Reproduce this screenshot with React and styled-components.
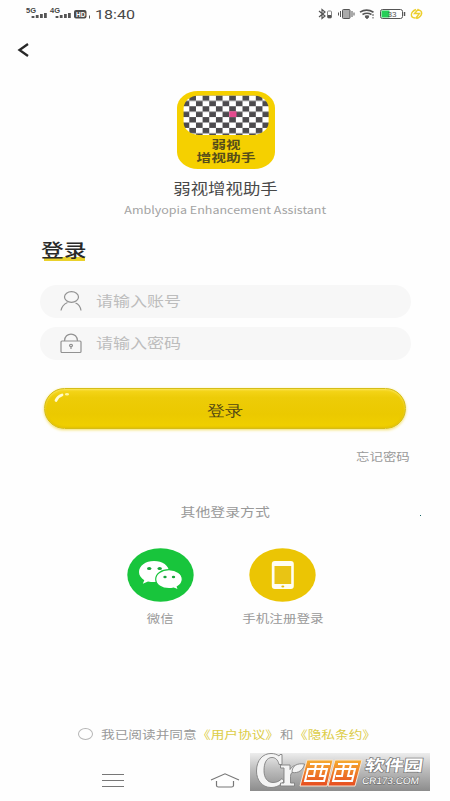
import React from 'react';
import styled, { createGlobalStyle } from 'styled-components';

const Global = createGlobalStyle`
  * { box-sizing: border-box; }
  body { margin: 0; background: #fefefe; }
  svg { display: block; flex: none; overflow: visible; }
`;
const sans = '"Noto Sans CJK SC", "Noto Sans", sans-serif';

const Screen = styled.main`
  width: 450px;
  height: 801px;
  overflow: hidden;
  display: flex;
  flex-direction: column;
  background: #fefefe;
  font-family: ${sans};
`;
/* Wide-set lettering used throughout the app */
const Text = styled.span`
  display: block;
  white-space: nowrap;
  font-size: ${p => p.$size}px;
  line-height: 20px;
  font-weight: ${p => p.$weight || 400};
  color: ${p => p.$color || '#999'};
  transform: scaleX(${p => p.$wide || 1.2});
  transform-origin: ${p => p.$from || 'left'} center;
`;
const StatusBar = styled.header`
  height: 28px;
  display: flex;
  justify-content: space-between;
  padding: 0 26px 0 25px;
`;
const NavBar = styled.nav`
  height: 63px;
  display: flex;
  align-items: flex-start;
  padding: 15px 0 0 17px;
`;
const BackButton = styled.button`
  border: 0;
  padding: 0;
  background: none;
`;
const Brand = styled.section`
  height: 146px;
  display: flex;
  flex-direction: column;
  align-items: center;
  padding-left: 1px;
`;
const AppName = styled.div`
  margin-top: 9px;
  height: 20px;
`;
const Tagline = styled.div`
  margin-top: 2px;
  height: 20px;
`;
const Form = styled.section`
  height: 247px;
  padding: 0 40px;
`;
const Heading = styled.div`
  height: 48px;
  padding: 2px 0 0 1px;
`;
const Underlined = styled.div`
  width: 45px;
  height: 22px;
  background: linear-gradient(#ead12b, #ead12b) 3px 18px / 41px 4px no-repeat;
`;
const Field = styled.div`
  width: 371px;
  height: 33px;
  margin-bottom: 9px;
  padding: 0 0 3px 20px;
  display: flex;
  align-items: center;
  gap: 14px;
  border-radius: 17px;
  background: #f7f7f7;
`;
const FieldIcon = styled.svg`
  margin-top: 2px;
`;
const Submit = styled.button`
  display: flex;
  align-items: center;
  justify-content: center;
  position: relative;
  width: 362px;
  height: 41px;
  margin: 28px 0 0 4px;
  padding: 4px 0 0;
  border: 1px solid #d5bd18;
  border-radius: 21px;
  background: linear-gradient(#f6d61c 0, #edcc08 22%, #ebc900 65%, #f1d000 100%);
  box-shadow: 0 1px 3px #f4df65, inset 0 1px 2px #fae55b, inset 0 -1px 2px #dfbd00;
`;
const Gloss = styled.svg`
  position: absolute;
  left: 9px;
  top: 3px;
`;
const Forgot = styled.div`
  display: flex;
  justify-content: flex-end;
  margin-top: 17px;
`;
const Others = styled.section`
  height: 238px;
  display: flex;
  flex-direction: column;
  align-items: center;
  padding-top: 18px;
`;
const Providers = styled.div`
  display: flex;
  width: 244px;
  margin: 26px 5px 0 0;
  justify-content: space-between;
`;
const Provider = styled.div`
  width: ${p => p.$width}px;
  display: flex;
  flex-direction: column;
  align-items: center;
  gap: 6px;
`;
const Title = styled.div`
  display: flex;
  justify-content: center;
  width: 450px;
  padding-left: 1px;
  position: relative;
`;
const Speck = styled.i`
  position: absolute;
  left: 420px;
  top: 13px;
  width: 1px;
  height: 1px;
  background: #166565;
`;
const Agreement = styled.div`
  height: 24px;
  display: flex;
  align-items: center;
  margin-left: 78px;
`;
const AgreementPart = styled.div`
  width: ${p => p.$width}px;
`;
const Radio = styled.span`
  width: 15px;
  height: 12px;
  margin-right: 8px;
  border: 1px solid #b5b5b5;
  border-radius: 50%;
`;
const SystemBar = styled.footer`
  flex: 1;
  display: flex;
  align-items: flex-start;
  padding-left: 102px;
`;
const Menu = styled.div`
  width: 22px;
  height: 13px;
  margin: 28px 86px 0 0;
  display: flex;
  flex-direction: column;
  justify-content: space-between;
`;
const MenuLine = styled.i`
  flex: none;
  height: 1px;
  background: #777;
`;
const HomeIcon = styled.svg`
  margin: 27px 10px 0 0;
`;
const Badge = styled.svg`
  margin-top: 7px;
`;

const Signal = ({ x, label }) => (
  <g transform={`translate(${x} 0)`}>
    <text x="0" y="13.2" fontSize="6.5" fontWeight="700" fontFamily="Liberation Sans, sans-serif" fill="#444" textLength="10" lengthAdjust="spacingAndGlyphs">{label}</text>
    <path d="M7 18v-2M11.2 18v-3M15.4 18v-4M19.4 18v-5" stroke="#555" strokeWidth="2.8" />
  </g>
);

const Logo = () => (
  <svg width="98" height="78" viewBox="0 0 98 78">
    <defs>
      <pattern id="check" width="13.3" height="10.84" patternUnits="userSpaceOnUse" x="12.3" y="4.4">
        <rect width="13.3" height="10.84" fill="#fff" />
        <path d="M0 0h6.65v5.42H0zM6.65 5.42h6.65v5.42H6.65z" fill="#4d4b4e" />
      </pattern>
    </defs>
    <rect width="98" height="78" rx="21" ry="17" fill="#f5d000" />
    <rect x="6.6" y="4.4" width="85" height="39.5" rx="15" ry="13" fill="url(#check)" />
    <rect x="52.2" y="20.3" width="7.3" height="5.8" fill="#e44b8e" />
    <g fontFamily={sans} fontWeight="600" fill="#574e19">
      <text x="34.5" y="58.2" fontSize="11.2" textLength="29" lengthAdjust="spacingAndGlyphs">弱视</text>
      <text x="19.5" y="71" fontSize="11.2" textLength="59" lengthAdjust="spacingAndGlyphs">增视助手</text>
    </g>
  </svg>
);

const WeChat = () => (
  <svg width="67" height="54" viewBox="0 0 67 54">
    <ellipse cx="33.5" cy="27" rx="33.2" ry="26.7" fill="#18c53c" />
    <path d="M27 13C18.500 13 12 17.800 12 24c0 3.300 2 6.200 5.300 8.200l-1.500 3.600 5.200-2.400c2 .5 4 .7 6 .7 8.500 0 15-4.700 15-10.500S35.500 13 27 13z" fill="#fff" />
    <path d="M42 21.700c-7.600 0-13.300 4.200-13.300 9.500S34.400 40.700 42 40.700c1.600 0 3.200-.2 4.700-.6l4.800 1.900-1.200-3.300c3.100-1.700 5-4.400 5-7.500 0-5.300-5.700-9.500-13.300-9.500z" fill="#fff" stroke="#18c53c" strokeWidth="1.200" />
    <g fill="#18a53a">
      <ellipse cx="22.200" cy="20.500" rx="2.200" ry="1.600" /><ellipse cx="32.700" cy="20.500" rx="2.200" ry="1.600" />
      <ellipse cx="38" cy="29" rx="1.700" ry="1.300" /><ellipse cx="46.500" cy="29" rx="1.700" ry="1.300" />
    </g>
  </svg>
);

const Phone = () => (
  <svg width="67" height="54" viewBox="0 0 67 54">
    <ellipse cx="33.5" cy="27" rx="33.2" ry="26.7" fill="#ebc504" />
    <rect x="22.800" y="13" width="22" height="28" rx="3" fill="#fffef2" />
    <rect x="25.500" y="18" width="16.700" height="18" fill="#e9c414" />
    <ellipse cx="33.800" cy="38.500" rx="1.500" ry="1.100" fill="#e3bc10" />
  </svg>
);

const Watermark = () => (
  <Badge width="180" height="38" viewBox="0 0 180 38">
    <defs>
      <linearGradient id="steel" x2="0" y2="1"><stop stopColor="#ededed" /><stop offset=".45" stopColor="#bcbcbc" /><stop offset="1" stopColor="#8c8c8c" /></linearGradient>
      <linearGradient id="orange" x2="0" y2="1"><stop stopColor="#f6ad31" /><stop offset="1" stopColor="#e64b20" /></linearGradient>
    </defs>
    <rect width="180" height="38" fill="url(#steel)" />
    <g stroke="#808080" strokeWidth=".9" fill="#f4f4f4" strokeLinejoin="round">
      <path d="M32 1.500v10h-3C28 6.500 25 4.500 22 4.500 16.500 4.500 14 10 14 17.500c0 7.500 3.500 12 9 12 4 0 6.500-1.500 9-4l2 2.500c-3 4-7.500 6.500-13 6.500C12 34.500 6.500 27 6.500 18 6.500 7 13 .5 21 .5c3.500 0 6 1 8 2.500l1-1.500z" />
      <path d="M30.500 12H40v4.500c1.500-2.500 3.500-4 6-4 2.500 0 4 1 4 3s-1.500 3-3 3c-3.500-1-6.500 1-6.500 5V30h4v3H30.500v-3H34V15h-3.500z" />
      <path d="M42 19.500c0-7 5-9.500 12.500-8.500-1 6-6 9.500-12.500 8.500z" />
    </g>
    <g fill="url(#orange)" stroke="#f7e5d2" strokeWidth="1">
      <path d="M57 7h26l-6 26H50z" /><path d="M85 7h27l-7 26H78z" />
    </g>
    <g fill="none" stroke="#fff" strokeWidth="2">
      <path d="M60 11h20M58 16h19l-3 12H55zM66 11l-2 12h-6M73 11l-3 12h6" />
      <path d="M88 11h20M86 16h19l-3 12H83zM94 11l-2 12h-6M101 11l-3 12h6" />
    </g>
    <g fill="#fff" stroke="#777" strokeWidth="1.300" paintOrder="stroke" transform="skewX(-8)">
      <text x="117" y="18.500" fontSize="15.5" fontWeight="600" fontFamily={sans} textLength="58" lengthAdjust="spacingAndGlyphs">软件园</text>
      <text x="116" y="31" fontSize="9.5" fontWeight="400" fontFamily="Liberation Sans, sans-serif" textLength="57" lengthAdjust="spacingAndGlyphs">CR173.COM</text>
    </g>
  </Badge>
);

export default function App() {
  return (
    <Screen>
      <Global />
      <StatusBar>
        <svg width="112" height="28" viewBox="0 0 112 28">
          <Signal x={1} label="5G" /><Signal x={25} label="4G" />
          <rect x="49" y="10" width="12.500" height="8.500" rx="2" fill="#4b4b4b" />
          <text x="51" y="16.700" fontSize="6.500" fontWeight="700" fontFamily="Liberation Sans, sans-serif" fill="#fff">HD</text>
          <path d="M64.500 15.500v3" stroke="#555" />
          <text x="70" y="18.500" fontSize="12.5" fontFamily="Roboto, sans-serif" fill="#484848" textLength="40" lengthAdjust="spacingAndGlyphs">18:40</text>
        </svg>
        <svg width="106" height="28" viewBox="318 0 106 28" fill="none" stroke="#555">
          <path d="M319 11l6 5-3 2.500v-9l3 2.500-6 5" strokeWidth="1.200" />
          <rect x="327.500" y="11" width="4" height="7" rx="1" stroke="#888" /><path d="M328 15.500h3v2h-3z" fill="#555" />
          <rect x="342.500" y="9.500" width="7.500" height="9" rx="1" fill="#aaa" />
          <path d="M340.500 11v6M338.500 12.500v3M352 11v6M354 12.500v3" />
          <path d="M360 12.200q6.500-4.200 13.500 0M362.500 14.500q4.500-2.500 9 0M365 16.500q2-1 4 0" strokeWidth="1.600" /><path d="M365.500 17h3l-1.500 1.800zM373 14v2M373 17v1.500" fill="#555" />
          <rect x="380.500" y="9.500" width="22" height="9" rx="2" /><rect x="381.500" y="10.500" width="8" height="7" fill="#25cf58" stroke="none" />
          <path d="M404.500 12v4" strokeWidth="1.500" />
          <text x="387.500" y="16.700" fontSize="7" fill="#555" stroke="none" fontFamily="Liberation Sans, sans-serif" textLength="9" lengthAdjust="spacingAndGlyphs">33</text>
          <path d="M415 18c-5-.5-5-6 1-8.500M417.500 10c6 0 5.500 6-1 8.500M418.500 9l-4 4.500h5l-4 5" stroke="#edcf2e" strokeWidth="1.400" />
        </svg>
      </StatusBar>
      <NavBar>
        <BackButton aria-label="返回">
          <svg width="14" height="14" viewBox="0 0 14 14"><path d="M11 1L2.500 7 11 13" fill="none" stroke="#282828" strokeWidth="2.300" /></svg>
        </BackButton>
      </NavBar>
      <Brand>
        <Logo />
        <AppName><Text $size={14.5} $color="#484848" $from="center">弱视增视助手</Text></AppName>
        <Tagline><Text $size={10.7} $wide={1.17} $color="#a3a3a3" $from="center">Amblyopia Enhancement Assistant</Text></Tagline>
      </Brand>
      <Form>
        <Heading><Underlined><Text $size={18.5} $wide={1.23} $weight={500} $color="#292929">登录</Text></Underlined></Heading>
        <Field>
          <FieldIcon width="22" height="20" viewBox="0 0 22 20" fill="none" stroke="#929292" strokeWidth="1.200"><ellipse cx="11.500" cy="6" rx="7" ry="5.300" /><path d="M1 19.500q1-5.500 6.500-8M15.500 12q4.500 1.500 5.500 7.500" /></FieldIcon>
          <Text $size={14.2} $color="#bdbdbd">请输入账号</Text>
        </Field>
        <Field>
          <FieldIcon width="22" height="20" viewBox="0 0 22 20" fill="none" stroke="#929292" strokeWidth="1.200"><rect x="1" y="8" width="20" height="11.500" rx="1" /><path d="M4.500 8C4.500-1.300 17.500-1.300 17.500 8" /><ellipse cx="11" cy="12.500" rx="1.500" ry="1.200" /><path d="M11 13.500v2.500" /></FieldIcon>
          <Text $size={14.2} $color="#bdbdbd">请输入密码</Text>
        </Field>
        <Submit>
          <Gloss width="20" height="12" viewBox="0 0 20 12"><path d="M2 8.500q1.500-4 6-5.500" fill="none" stroke="#fffbd0" strokeWidth="2.800" strokeLinecap="round" /><ellipse cx="13" cy="2.300" rx="2" ry="1.300" fill="#fff6a0" /></Gloss>
          <Text $size={15} $color="#514714" $from="center">登录</Text>
        </Submit>
        <Forgot><Text $size={11.2} $from="right">忘记密码</Text></Forgot>
      </Form>
      <Others>
        <Title><Text $size={12.4} $from="center">其他登录方式</Text><Speck /></Title>
        <Providers>
          <Provider $width={120}><WeChat /><Text $size={11.2} $from="center">微信</Text></Provider>
          <Provider $width={124}><Phone /><Text $size={11.3} $from="center">手机注册登录</Text></Provider>
        </Providers>
      </Others>
      <Agreement>
        <Radio />
        <AgreementPart $width={96}><Text $size={11.4}>我已阅读并同意</Text></AgreementPart>
        <AgreementPart $width={83}><Text $size={11.4} $color="#dccd47">《用户协议》</Text></AgreementPart>
        <AgreementPart $width={13.5}><Text $size={11.2}>和</Text></AgreementPart>
        <Text $size={11.4} $color="#dccd47">《隐私条约》</Text>
      </Agreement>
      <SystemBar>
        <Menu><MenuLine /><MenuLine /><MenuLine /></Menu>
        <HomeIcon width="30" height="15" viewBox="0 0 30 15" fill="none" stroke="#777" strokeWidth="1.200"><path d="M1 7L15 .8 29 7M6.500 8v4.500q0 1.500 2 1.500h13q2 0 2-1.500V8" /></HomeIcon>
        <Watermark />
      </SystemBar>
    </Screen>
  );
}
